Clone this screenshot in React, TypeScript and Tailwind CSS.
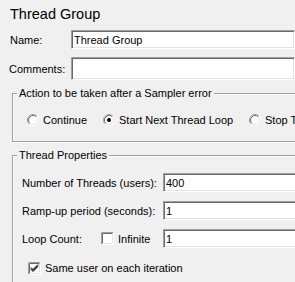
import React from 'react';

const font = { fontFamily: '"Liberation Sans", Arial, sans-serif' };

const Field = ({ value = '', h = 'h-[19px]' }: { value?: string; h?: string }) => (
  <div
    className={`${h} w-[400px] flex items-center px-[2px] bg-white border border-[#a0a0a0] border-b-white border-r-white shadow-[inset_1px_1px_0_#696969,inset_-1px_-1px_0_#e3e3e3] text-[11px] text-black`}
  >
    {value}
  </div>
);

const Radio = ({ checked = false }: { checked?: boolean }) => (
  <svg width="12" height="12" viewBox="0 0 12 12" className="shrink-0">
    <circle cx="6" cy="6" r="5" fill="#fff" />
    <path d="M2.11 9.89 A5.5 5.5 0 0 1 9.89 2.11" fill="none" stroke="#a0a0a0" />
    <path d="M9.89 2.11 A5.5 5.5 0 0 1 2.11 9.89" fill="none" stroke="#fff" />
    <path d="M2.82 9.18 A4.5 4.5 0 0 1 9.18 2.82" fill="none" stroke="#696969" />
    <path d="M9.18 2.82 A4.5 4.5 0 0 1 2.82 9.18" fill="none" stroke="#e3e3e3" />
    {checked && <circle cx="6" cy="6" r="2" fill="#000" />}
  </svg>
);

const Check = ({ checked = false }: { checked?: boolean }) => (
  <svg width="13" height="13" viewBox="0 0 13 13" className="shrink-0">
    <rect x="0" y="0" width="13" height="13" fill="#fff" />
    <path d="M0.5 12.5 V0.5 H12.5" fill="none" stroke="#a0a0a0" />
    <path d="M12.5 0.5 V12.5 H0.5" fill="none" stroke="#fff" />
    <path d="M1.5 11.5 V1.5 H11.5" fill="none" stroke="#696969" />
    <path d="M11.5 1.5 V11.5 H1.5" fill="none" stroke="#e3e3e3" />
    {checked && (
      <path d="M3 5.5 L5 7.5 L10 2.5 M3 6.5 L5 8.5 L10 3.5 M3 7.5 L5 9.5 L10 4.5" fill="none" stroke="#000" strokeWidth="1" />
    )}
  </svg>
);

const Group = ({ title, className, children }: { title: string; className: string; children: React.ReactNode }) => (
  <div
    className={`relative ml-[12px] w-[500px] border border-[#a0a0a0] shadow-[inset_1px_1px_0_#fff,1px_1px_0_#fff] ${className}`}
  >
    <span className="absolute -top-[8px] left-[4px] px-[2px] bg-[#f0f0f0] leading-[14px]">{title}</span>
    {children}
  </div>
);

export default function App() {
  return (
    <div className="w-[295px] h-[282px] overflow-hidden bg-[#f0f0f0] text-[11px] leading-[14px] text-black" style={font}>
      {/* Title */}
      <div className="pt-[5px] pl-[10px] text-[14.5px] leading-[19px] whitespace-nowrap">Thread Group</div>

      {/* Name / Comments */}
      <div className="mt-[6px] flex items-center">
        <span className="w-[71px] pl-[10px] shrink-0">Name:</span>
        <Field value="Thread Group" />
      </div>
      <div className="mt-[8px] flex items-center">
        <span className="w-[71px] pl-[9px] shrink-0">Comments:</span>
        <Field h="h-[23px]" />
      </div>

      {/* Sampler error action */}
      <Group title="Action to be taken after a Sampler error" className="mt-[13px] pt-[19px] pb-[14px] pl-[14px]">
        <div className="flex items-center h-[14px] whitespace-nowrap">
          <label className="w-[76px] flex items-center gap-[4px] shrink-0">
            <Radio />
            <span>Continue</span>
          </label>
          <label className="w-[146px] flex items-center gap-[4px] shrink-0">
            <Radio checked />
            <span>Start Next Thread Loop</span>
          </label>
          <label className="flex items-center gap-[4px] shrink-0">
            <Radio />
            <span>Stop Thread</span>
          </label>
        </div>
      </Group>

      {/* Thread properties */}
      <Group title="Thread Properties" className="mt-[13px] pt-[17px] pb-[20px] pl-[9px]">
        <div className="flex flex-col gap-[9px]">
          <div className="flex items-center whitespace-nowrap">
            <span className="w-[141px] shrink-0">Number of Threads (users):</span>
            <Field value="400" />
          </div>
          <div className="flex items-center whitespace-nowrap">
            <span className="w-[141px] shrink-0">Ramp-up period (seconds):</span>
            <Field value="1" />
          </div>
          <div className="flex items-center whitespace-nowrap">
            <span className="w-[79px] shrink-0">Loop Count:</span>
            <label className="w-[62px] flex items-center gap-[4px] shrink-0">
              <Check />
              <span>Infinite</span>
            </label>
            <Field value="1" />
          </div>
        </div>
        <label className="mt-[13px] ml-[6px] flex items-center gap-[4px] h-[14px] whitespace-nowrap">
          <Check checked />
          <span>Same user on each iteration</span>
        </label>
      </Group>
    </div>
  );
}
